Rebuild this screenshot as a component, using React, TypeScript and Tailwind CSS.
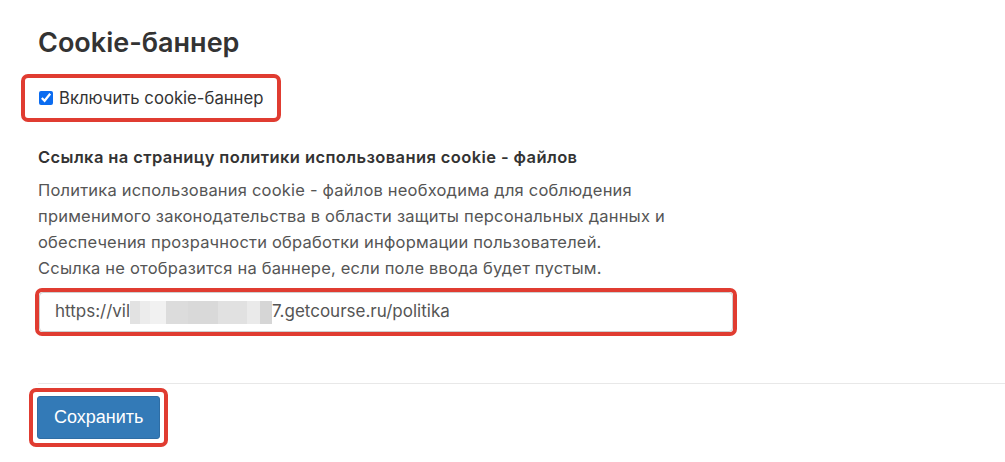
import React from 'react';

const annotate = 'border-4 border-[#e03c31] rounded-[7px]';

const PolicyInput: React.FC = () => {
  return (
    <div className="flex h-[40px] w-[694px] items-center rounded-[4px] border border-[#cfcfcf] bg-white px-[15px] text-[17px] text-[#555]">
      <span>https://vil</span>
      <span className="flex h-[23px] items-stretch">
        <span className="w-[10px] bg-[#e2e2e2]" />
        <span className="w-[10px] bg-[#ececec]" />
        <span className="w-[16px] bg-[#f1f1f1]" />
        <span className="w-[22px] bg-[#dcdcdc]" />
        <span className="w-[30px] bg-[#d9d9d9]" />
        <span className="w-[29px] bg-[#e1e1e1]" />
        <span className="w-[13px] bg-[#eaeaea]" />
        <span className="w-[12px] bg-[#d6d6d6]" />
      </span>
      <span>7.getcourse.ru/politika</span>
    </div>
  );
};

export default function App() {
  return (
    <div className="h-[462px] w-[1005px] overflow-hidden bg-white font-['Inter',sans-serif] text-[#333]">
      <div className="pl-[38px] pt-[26px]">
        <h2 className="text-[27px] font-semibold leading-[34px] text-[#333]">Cookie-баннер</h2>

        <label className={`mt-[14px] ml-[-17px] inline-flex items-center gap-[6px] px-[14px] py-[9px] ${annotate}`}>
          <input type="checkbox" defaultChecked className="h-[14px] w-[14px] accent-[#0b6cf0]" />
          <span className="text-[16.7px] leading-[22px] text-[#333]">Включить cookie-баннер</span>
        </label>

        <div className="mt-[24px] text-[16.5px] font-semibold leading-[22px] tracking-[0.4px] text-[#333]">
          Ссылка на страницу политики использования cookie - файлов
        </div>

        <p className="mt-[9px] w-[680px] text-[16.5px] leading-[26px] tracking-[0.2px] text-[#555]">
          Политика использования cookie - файлов необходима для соблюдения
          <br />
          применимого законодательства в области защиты персональных данных и
          <br />
          обеспечения прозрачности обработки информации пользователей.
          <br />
          Ссылка не отобразится на баннере, если поле ввода будет пустым.
        </p>

        <div className={`mt-[7px] ml-[-3px] flex w-fit ${annotate}`}>
          <PolicyInput />
        </div>
      </div>

      <div className="ml-[38px] mt-[47px] border-t border-[#e8e8e8]" />

      <div className="flex pl-[29px] pt-[4px]">
        <div className={`flex p-[4px] ${annotate}`}>
          <button className="h-[43px] rounded-[3px] border border-[#2e6da4] bg-[#337ab7] px-[16px] font-['Liberation_Sans',sans-serif] text-[18px] text-white">
            Сохранить
          </button>
        </div>
      </div>
    </div>
  );
}
